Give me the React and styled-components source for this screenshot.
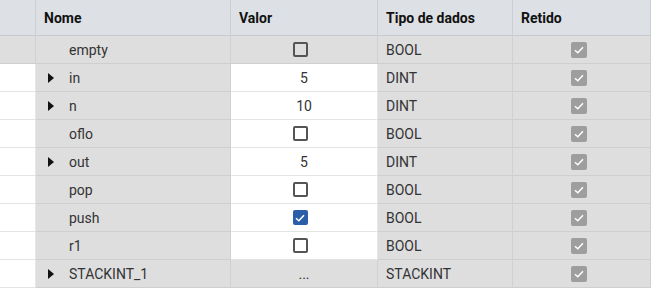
import styled, { createGlobalStyle } from 'styled-components';

const GlobalStyle = createGlobalStyle`
    body {
        margin: 0;
        background: #fff;
        font-family: Roboto, 'Liberation Sans', sans-serif;
    }
`;

const rows = [
    { name: 'empty', value: 'unchecked', type: 'BOOL', selected: true },
    { name: 'in', value: '5', type: 'DINT', expand: true },
    { name: 'n', value: '10', type: 'DINT', expand: true },
    { name: 'oflo', value: 'unchecked', type: 'BOOL' },
    { name: 'out', value: '5', type: 'DINT', expand: true },
    { name: 'pop', value: 'unchecked', type: 'BOOL' },
    { name: 'push', value: 'checked', type: 'BOOL' },
    { name: 'r1', value: 'unchecked', type: 'BOOL' },
    { name: 'STACKINT_1', value: '...', type: 'STACKINT', expand: true, readonly: true },
];

export default function App() {
    return (
        <>
            <GlobalStyle />
            <Grid>
                <HeadCell />
                <HeadCell>Nome</HeadCell>
                <HeadCell>Valor</HeadCell>
                <HeadCell>Tipo de dados</HeadCell>
                <HeadCell>Retido</HeadCell>
                {rows.map((row, i) => (
                    <Row key={i} row={row} />
                ))}
            </Grid>
        </>
    );
}

function Row({ row }) {
    const valueGrey = row.selected || row.readonly;
    let value;
    if (row.value === 'unchecked') value = <Box />;
    else if (row.value === 'checked') value = <Box $checked><Tick /></Box>;
    else value = <span>{row.value}</span>;

    return (
        <>
            <Cell $grey={row.selected} />
            <Cell $grey>
                <Arrow $show={row.expand} />
                {row.name}
            </Cell>
            <Cell $grey={valueGrey} $center>
                {value}
            </Cell>
            <Cell $grey>{row.type}</Cell>
            <Cell $grey $center>
                <Retained>
                    <Tick />
                </Retained>
            </Cell>
        </>
    );
}

function Tick() {
    return (
        <svg width="10" height="8" viewBox="0 0 10 8">
            <path d="M1 4.2 L3.8 6.8 L9 1.2" fill="none" stroke="#fff" strokeWidth="1.5" />
        </svg>
    );
}

const Grid = styled.div`
    display: grid;
    grid-template-columns: 36px 195px 147px 135px 1fr;
    grid-template-rows: 36px;
    grid-auto-rows: 28px;
    width: 651px;
    font-size: 14px;
    color: #333;
`;

const HeadCell = styled.div`
    display: flex;
    align-items: center;
    padding: 0 8px;
    background: #dde1e5;
    border-right: 1px solid #cbcfd3;
    border-bottom: 1px solid #c6cacf;
    font-weight: 700;
    color: #111;
`;

const Cell = styled.div`
    display: flex;
    align-items: center;
    justify-content: ${(p) => (p.$center ? 'center' : 'flex-start')};
    padding: 0 8px;
    background: ${(p) => (p.$grey ? '#dedede' : '#fff')};
    border-right: 1px solid ${(p) => (p.$grey ? '#cfd2d5' : '#e6e6e6')};
    border-bottom: 1px solid ${(p) => (p.$grey ? '#cdcfd2' : '#e3e3e3')};
    white-space: nowrap;
`;

const Arrow = styled.span`
    width: 0;
    height: 0;
    margin: 0 15px 0 4px;
    border-top: 5px solid transparent;
    border-bottom: 5px solid transparent;
    border-left: 6px solid ${(p) => (p.$show ? '#111' : 'transparent')};
`;

const Box = styled.span`
    display: flex;
    align-items: center;
    justify-content: center;
    box-sizing: border-box;
    width: 15px;
    height: 15px;
    margin-right: 8px;
    border: 2px solid ${(p) => (p.$checked ? '#2b5ea8' : '#555')};
    border-radius: 2px;
    background: ${(p) => (p.$checked ? '#2b5ea8' : 'transparent')};
`;

const Retained = styled.span`
    display: flex;
    align-items: center;
    justify-content: center;
    width: 16px;
    height: 16px;
    margin-right: 6px;
    border-radius: 2px;
    background: #9e9e9e;
`;
